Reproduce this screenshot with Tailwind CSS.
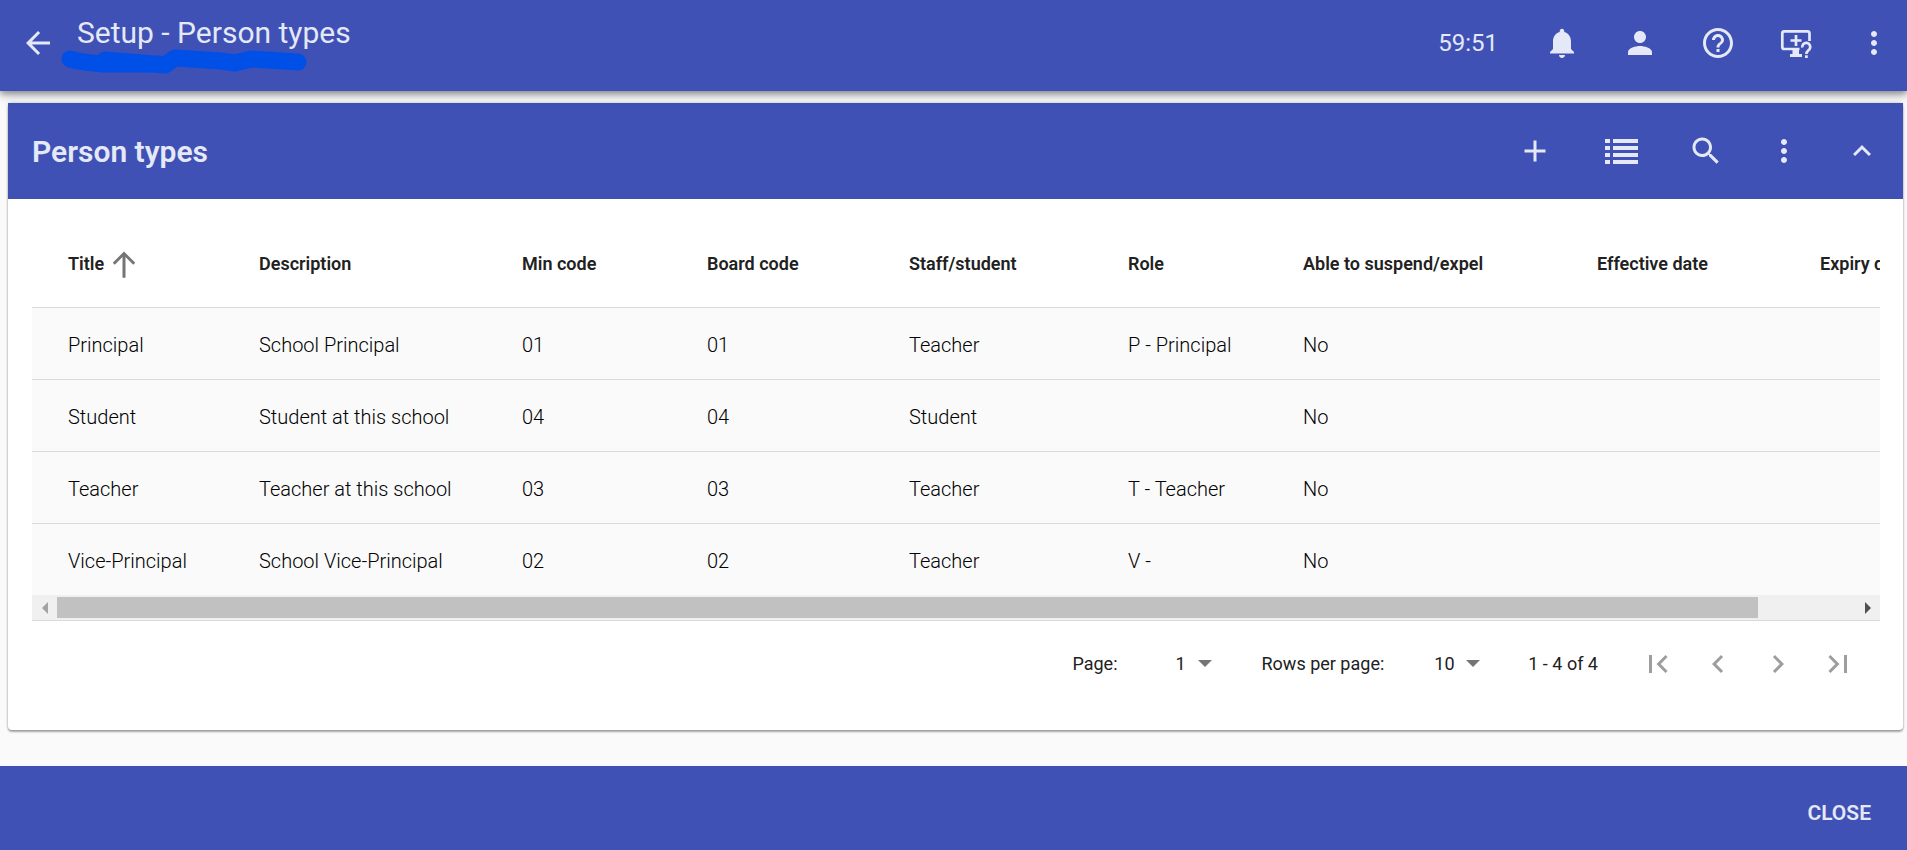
<!DOCTYPE html>
<html lang="en">
<head>
<meta charset="utf-8">
<title>Setup - Person types</title>
<script src="https://cdn.jsdelivr.net/npm/@tailwindcss/browser@4"></script>
</head>
<body class="flex min-h-screen flex-col bg-[#fafafa] font-[Roboto,sans-serif] text-[#212121]">

<header class="relative z-10 flex h-[91px] items-center justify-between bg-[#3f51b5] pb-[6px] pl-5 text-[#e5e8f6] shadow-[0_3px_6px_rgba(0,0,0,0.35),0_6px_12px_rgba(0,0,0,0.14)]">
  <div class="flex items-center gap-[21px]">
    <button type="button" aria-label="Back" class="size-9">
      <svg viewBox="0 0 24 24" class="size-9 fill-current"><path d="M20 11H7.830l5.590-5.590L12 4l-8 8 8 8 1.410-1.410L7.830 13H20v-2z"/></svg>
    </button>
    <div class="relative pb-5">
      <h1 class="text-[30px] leading-9">Setup - Person types</h1>
      <svg aria-hidden="true" viewBox="0 0 250 28" class="absolute top-8 -left-4 h-7 w-[250px] fill-none stroke-[#004fe6]" stroke-width="17" stroke-linecap="round" stroke-linejoin="round"><path d="M9 12C18 15 32 16 42 17L98 17M44 13L104 18L114 11L160 14L174 16L190 12L237 15"/></svg>
    </div>
  </div>
  <div class="flex items-center">
    <span class="pr-[25px] text-2xl">59:51</span>
    <button type="button" aria-label="Notifications" class="flex w-[78px] justify-center"><svg viewBox="0 0 24 24" class="size-9 fill-current"><path d="M12 22c1.100 0 2-.9 2-2h-4c0 1.100.89 2 2 2zm6-6v-5c0-3.070-1.640-5.640-4.500-6.320V4c0-.83-.67-1.500-1.500-1.500s-1.500.67-1.500 1.500v.68C7.630 5.360 6 7.920 6 11v5l-2 2v1h16v-1l-2-2z"/></svg></button>
    <button type="button" aria-label="Account" class="flex w-[78px] justify-center"><svg viewBox="0 0 24 24" class="size-9 fill-current"><path d="M12 12c2.210 0 4-1.790 4-4s-1.790-4-4-4-4 1.790-4 4 1.790 4 4 4zm0 2c-2.670 0-8 1.340-8 4v2h16v-2c0-2.660-5.330-4-8-4z"/></svg></button>
    <button type="button" aria-label="Help" class="flex w-[78px] justify-center"><svg viewBox="0 0 24 24" class="size-9 fill-current"><path d="M11 18h2v-2h-2v2zm1-16C6.480 2 2 6.480 2 12s4.480 10 10 10 10-4.480 10-10S17.520 2 12 2zm0 18c-4.410 0-8-3.590-8-8s3.590-8 8-8 8 3.590 8 8-3.590 8-8 8zm0-14c-2.210 0-4 1.790-4 4h2c0-1.100.9-2 2-2s2 .9 2 2c0 2-3 1.750-3 5h2c0-2.250 3-2.500 3-5 0-2.210-1.790-4-4-4z"/></svg></button>
    <button type="button" aria-label="Remote support" class="flex w-[78px] justify-center"><svg viewBox="0 0 36 36" class="size-9 fill-none stroke-current" stroke-width="2.700"><path d="M31.500 16V8.300a2 2 0 0 0-2-2H6.300a2 2 0 0 0-2 2V22a2 2 0 0 0 2 2H21.500M18 10v11M12.500 15.500h11"/><path d="M14.500 24H21v5h3v3H12v-3h2.500z" class="fill-current stroke-none"/><path d="M24.300 22.500a4 4 0 1 1 7.500 1.200c-1.100 1.700-3.400 2.300-3.400 5.300M28.400 30.300v2.700"/></svg></button>
    <button type="button" aria-label="More" class="flex w-[72px] justify-end pr-[15px]"><svg viewBox="0 0 24 24" class="size-9 fill-current"><path d="M12 8c1.100 0 2-.9 2-2s-.9-2-2-2-2 .9-2 2 .9 2 2 2zm0 2c-1.100 0-2 .9-2 2s.9 2 2 2 2-.9 2-2-.9-2-2-2zm0 6c-1.100 0-2 .9-2 2s.9 2 2 2 2-.9 2-2-.9-2-2-2z"/></svg></button>
  </div>
</header>

<main class="flex-1 pt-3 pr-1 pb-9 pl-2">
  <section class="rounded bg-white shadow-[0_2px_2px_rgba(0,0,0,0.3),0_0_3px_rgba(0,0,0,0.25)]">
    <div class="flex h-24 items-center justify-between bg-[#3f51b5] pl-6 text-[#e5e8f6]">
      <h2 class="text-[30px] font-semibold">Person types</h2>
      <div class="flex items-center pr-[2px]">
        <button type="button" aria-label="Add" class="flex w-20 justify-center"><svg viewBox="0 0 24 24" class="size-9 fill-current"><path d="M19 13h-6v6h-2v-6H5v-2h6V5h2v6h6v2z"/></svg></button>
        <button type="button" aria-label="List view" class="flex w-[92px] justify-center"><svg viewBox="0 0 33 25" class="h-[25px] w-[33px] fill-current"><path d="M0 0h5v4H0zM8 0h25v4H8zM0 7h5v4H0zM8 7h25v4H8zM0 14h5v4H0zM8 14h25v4H8zM0 21h5v4H0zM8 21h25v4H8z"/></svg></button>
        <button type="button" aria-label="Search" class="flex w-[78px] justify-center"><svg viewBox="0 0 24 24" class="size-9 fill-current"><path d="M15.500 14h-.79l-.28-.27C15.410 12.590 16 11.110 16 9.500 16 5.910 13.090 3 9.500 3S3 5.910 3 9.500 5.910 16 9.500 16c1.610 0 3.090-.59 4.230-1.570l.27.28v.79l5 4.990L20.490 19l-4.990-5zm-6 0C7.010 14 5 11.990 5 9.500S7.010 5 9.500 5 14 7.010 14 9.500 11.990 14 9.500 14z"/></svg></button>
        <button type="button" aria-label="More actions" class="flex w-[78px] justify-center"><svg viewBox="0 0 24 24" class="size-9 fill-current"><path d="M12 8c1.100 0 2-.9 2-2s-.9-2-2-2-2 .9-2 2 .9 2 2 2zm0 2c-1.100 0-2 .9-2 2s.9 2 2 2 2-.9 2-2-.9-2-2-2zm0 6c-1.100 0-2 .9-2 2s.9 2 2 2 2-.9 2-2-.9-2-2-2z"/></svg></button>
        <button type="button" aria-label="Collapse" class="flex w-[78px] justify-center"><svg viewBox="0 0 24 24" class="size-9 fill-current"><path d="M12 8l-6 6 1.410 1.410L12 10.830l4.590 4.580L18 14z"/></svg></button>
      </div>
    </div>

    <div class="pt-5 pr-[23px] pb-6 pl-6">
      <div class="overflow-hidden">
        <table class="w-[1953px] table-fixed text-left text-xl">
          <colgroup><col class="w-[191px]"><col class="w-[263px]"><col class="w-[185px]"><col class="w-[202px]"><col class="w-[219px]"><col class="w-[175px]"><col class="w-[294px]"><col class="w-[223px]"><col></colgroup>
          <thead>
            <tr class="h-[88px] text-lg [&>th]:pt-[2px] [&>th]:pl-9 [&>th]:font-semibold">
              <th><div class="flex items-center">Title<svg viewBox="0 0 24 24" class="ml-[5px] size-[30px] fill-[#757575]"><path d="M3 11l1.600 1.600L10.800 6.400V23h2.400V6.400l6.200 6.200L21 11l-9-9z"/></svg></div></th>
              <th>Description</th><th>Min code</th><th>Board code</th><th>Staff/student</th><th>Role</th><th>Able to suspend/expel</th><th>Effective date</th><th>Expiry date</th>
            </tr>
          </thead>
          <tbody class="bg-[#fafafa] font-light text-black [&>tr]:h-[72px] [&>tr]:border-t [&>tr]:border-[#dadada] [&_td]:pt-1 [&_td]:pl-9">
            <tr><td>Principal</td><td>School Principal</td><td>01</td><td>01</td><td>Teacher</td><td>P - Principal</td><td>No</td><td></td><td></td></tr>
            <tr><td>Student</td><td>Student at this school</td><td>04</td><td>04</td><td>Student</td><td></td><td>No</td><td></td><td></td></tr>
            <tr><td>Teacher</td><td>Teacher at this school</td><td>03</td><td>03</td><td>Teacher</td><td>T - Teacher</td><td>No</td><td></td><td></td></tr>
            <tr><td>Vice-Principal</td><td>School Vice-Principal</td><td>02</td><td>02</td><td>Teacher</td><td>V -</td><td>No</td><td></td><td></td></tr>
          </tbody>
        </table>
      </div>

      <!-- Horizontal scroll bar -->
      <div class="flex h-[26px] items-center border-b border-[#dadada] bg-[#f0f0f0]">
        <button type="button" aria-label="Scroll left" class="flex w-[25px] justify-center"><svg viewBox="0 0 6 12" class="h-3 w-[6px] fill-[#a3a3a3]"><path d="M6 0v12L0 6z"/></svg></button>
        <div class="flex-1"><div class="h-[21px] bg-[#c1c1c1]" style="width:94.6%"></div></div>
        <button type="button" aria-label="Scroll right" class="flex w-[25px] justify-center"><svg viewBox="0 0 6 12" class="h-3 w-[6px] fill-[#505050]"><path d="M0 0v12l6-6z"/></svg></button>
      </div>

      <div class="flex h-[85px] items-center justify-end pr-3 text-lg">
        <label for="page">Page:</label>
        <div class="relative ml-[38px] flex items-center">
          <select id="page" class="w-[56px] appearance-none pl-5 outline-none"><option>1</option></select>
          <svg viewBox="0 0 14 7" class="pointer-events-none absolute right-0 h-[7px] w-[14px] fill-[#757575]"><path d="M0 0h14L7 7z"/></svg>
        </div>
        <label for="rows" class="ml-[50px]">Rows per page:</label>
        <div class="relative ml-8 flex items-center">
          <select id="rows" class="w-[64px] appearance-none pl-[18px] outline-none"><option>10</option></select>
          <svg viewBox="0 0 14 7" class="pointer-events-none absolute right-0 h-[7px] w-[14px] fill-[#757575]"><path d="M0 0h14L7 7z"/></svg>
        </div>
        <span class="ml-12">1 - 4 of 4</span>
        <div class="ml-[30px] flex text-[#9e9e9e]">
          <button type="button" aria-label="First page" class="flex w-[60px] justify-center"><svg viewBox="0 0 24 24" class="size-9 fill-current"><path d="M18.410 16.590L13.820 12l4.590-4.590L17 6l-6 6 6 6zM6 6h2v12H6z"/></svg></button>
          <button type="button" aria-label="Previous page" class="flex w-[60px] justify-center"><svg viewBox="0 0 24 24" class="size-9 fill-current"><path d="M15.410 7.410L14 6l-6 6 6 6 1.410-1.410L10.830 12z"/></svg></button>
          <button type="button" aria-label="Next page" class="flex w-[60px] justify-center"><svg viewBox="0 0 24 24" class="size-9 fill-current"><path d="M10 6L8.590 7.410 13.170 12l-4.580 4.590L10 18l6-6z"/></svg></button>
          <button type="button" aria-label="Last page" class="flex w-[60px] justify-center"><svg viewBox="0 0 24 24" class="size-9 fill-current"><path d="M5.590 7.410L10.180 12l-4.590 4.590L7 18l6-6-6-6zM16 6h2v12h-2z"/></svg></button>
        </div>
      </div>
    </div>
  </section>
</main>

<footer class="flex h-[84px] items-center justify-end bg-[#3f51b5] pt-3 pr-9 text-[#e5e8f6]">
  <button type="button" class="text-[21px] font-semibold">CLOSE</button>
</footer>
</body>
</html>
